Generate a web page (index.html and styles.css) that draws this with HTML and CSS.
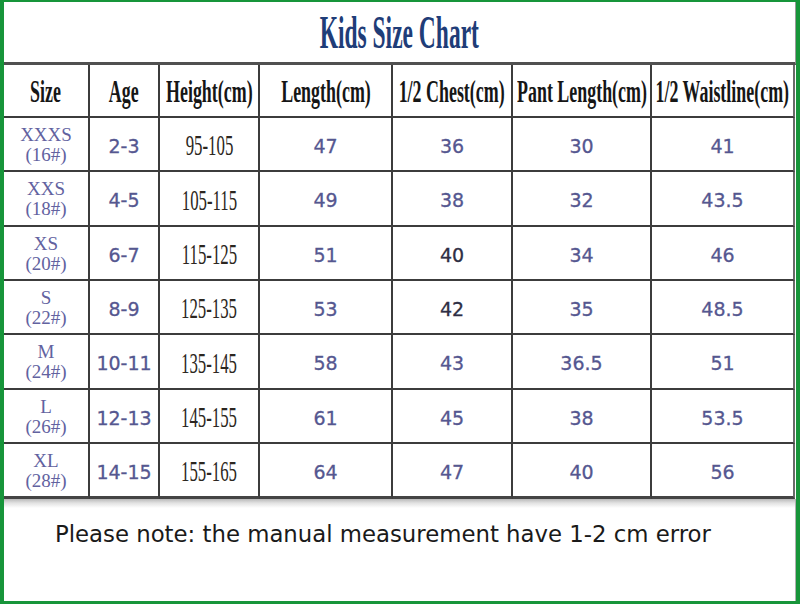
FILE: index.html
```html
<!DOCTYPE html>
<html lang="en">
<head>
<meta charset="utf-8">
<title>Kids Size Chart</title>
<link rel="stylesheet" href="styles.css">
</head>
<body>
<div class="frame">
  <div class="title"><span class="sq title-text">Kids Size Chart</span></div>
  <div class="grid">
    <div class="cell head"><span class="sq">Size</span></div>
    <div class="cell head"><span class="sq">Age</span></div>
    <div class="cell head"><span class="sq">Height(cm)</span></div>
    <div class="cell head"><span class="sq">Length(cm)</span></div>
    <div class="cell head"><span class="sq">1/2 Chest(cm)</span></div>
    <div class="cell head"><span class="sq">Pant Length(cm)</span></div>
    <div class="cell head last"><span class="sq">1/2 Waistline(cm)</span></div>

    <div class="cell size"><span>XXXS</span><span>(16#)</span></div>
    <div class="cell num">2-3</div>
    <div class="cell hgt"><span class="sq">95-105</span></div>
    <div class="cell num">47</div>
    <div class="cell num">36</div>
    <div class="cell num">30</div>
    <div class="cell num last">41</div>

    <div class="cell size"><span>XXS</span><span>(18#)</span></div>
    <div class="cell num">4-5</div>
    <div class="cell hgt"><span class="sq">105-115</span></div>
    <div class="cell num">49</div>
    <div class="cell num">38</div>
    <div class="cell num">32</div>
    <div class="cell num last">43.5</div>

    <div class="cell size"><span>XS</span><span>(20#)</span></div>
    <div class="cell num">6-7</div>
    <div class="cell hgt"><span class="sq">115-125</span></div>
    <div class="cell num">51</div>
    <div class="cell num dark">40</div>
    <div class="cell num">34</div>
    <div class="cell num last">46</div>

    <div class="cell size"><span>S</span><span>(22#)</span></div>
    <div class="cell num">8-9</div>
    <div class="cell hgt"><span class="sq">125-135</span></div>
    <div class="cell num">53</div>
    <div class="cell num dark">42</div>
    <div class="cell num">35</div>
    <div class="cell num last">48.5</div>

    <div class="cell size"><span>M</span><span>(24#)</span></div>
    <div class="cell num">10-11</div>
    <div class="cell hgt"><span class="sq">135-145</span></div>
    <div class="cell num">58</div>
    <div class="cell num">43</div>
    <div class="cell num">36.5</div>
    <div class="cell num last">51</div>

    <div class="cell size"><span>L</span><span>(26#)</span></div>
    <div class="cell num">12-13</div>
    <div class="cell hgt"><span class="sq">145-155</span></div>
    <div class="cell num">61</div>
    <div class="cell num">45</div>
    <div class="cell num">38</div>
    <div class="cell num last">53.5</div>

    <div class="cell size bottom"><span>XL</span><span>(28#)</span></div>
    <div class="cell num bottom">14-15</div>
    <div class="cell hgt bottom"><span class="sq">155-165</span></div>
    <div class="cell num bottom">64</div>
    <div class="cell num bottom">47</div>
    <div class="cell num bottom">40</div>
    <div class="cell num bottom last">56</div>
  </div>
  <div class="note">Please note: the manual measurement have 1-2 cm error</div>
</div>
</body>
</html>
```

FILE: styles.css
```css
* { box-sizing: border-box; }
html, body { margin: 0; padding: 0; background: #fff; }
body { width: 800px; height: 604px; overflow: hidden; }

.frame {
  width: 800px;
  height: 604px;
  border-style: solid;
  border-color: #17953a;
  border-width: 2px 4px 3px 4px;
  background: #fff;
  display: flex;
  flex-direction: column;
}

.sq {
  display: inline-block;
  white-space: nowrap;
  transform: scaleX(0.56);
}

.title {
  height: 63px;
  flex: none;
  display: flex;
  align-items: center;
  justify-content: center;
  border-bottom: 3px solid #505050;
  border-right: 1px solid #9a9a9a;
  font-family: "Liberation Serif", serif;
  font-weight: bold;
  font-size: 47px;
  color: #1f3d78;
}
.title .title-text { transform: scaleX(0.5); }

.grid {
  flex: none;
  display: grid;
  grid-template-columns: 86px 70px 100px 133px 120px 139px 143px;
  grid-template-rows: 53px 54px 55px 54px 54px 55px 54px 55px;
}

.cell {
  display: flex;
  align-items: center;
  justify-content: center;
  text-align: center;
  border-right: 2px solid #3c3c3c;
  border-bottom: 2px solid #3c3c3c;
  white-space: nowrap;
}
.cell.last { border-right: 2px solid #6a6a6a; }
.cell.bottom { border-bottom: 3px solid #444; }

.head {
  font-family: "Liberation Serif", serif;
  font-weight: bold;
  font-size: 32px;
  color: #161616;
  padding-top: 2px;
}

.size {
  flex-direction: column;
  font-family: "Liberation Serif", serif;
  font-size: 19px;
  line-height: 20px;
  color: #62629f;
  padding-top: 1px;
}

.num {
  font-family: "DejaVu Sans", sans-serif;
  font-size: 19px;
  color: #555790;
  -webkit-text-stroke: 0.3px #555790;
  padding-top: 3px;
}
.num.dark { color: #2e2e44; -webkit-text-stroke: 0.3px #2e2e44; }

.hgt {
  font-family: "Liberation Serif", serif;
  font-size: 30px;
  color: #2b2620;
  padding-top: 2px;
}

.note {
  flex: 1;
  background: linear-gradient(#b9b9b9 0, #e2e2e2 4px, #fff 9px);
  border-right: 1px solid #b0b0b0;
  font-family: "DejaVu Sans", sans-serif;
  font-size: 22.8px;
  color: #1a1a1a;
  padding: 22px 0 0 51px;
}
```
